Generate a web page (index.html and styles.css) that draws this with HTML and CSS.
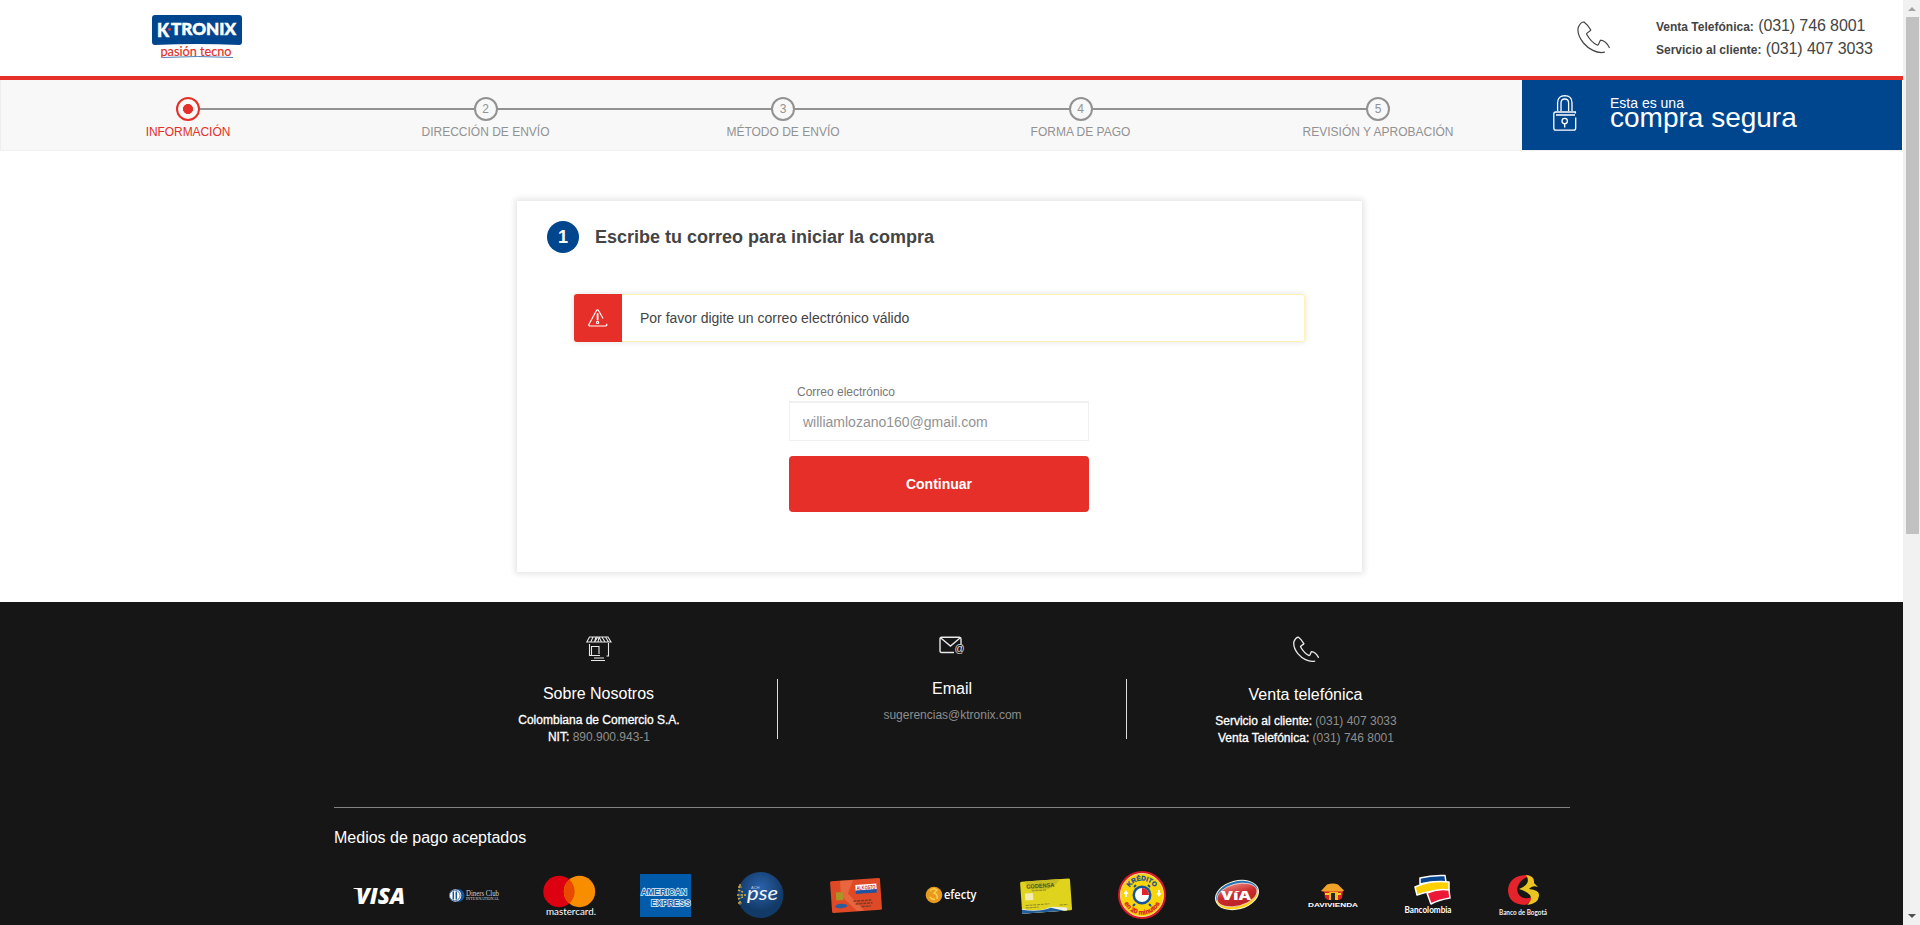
FILE: index.html
```html
<!DOCTYPE html>
<html lang="es">
<head>
<meta charset="utf-8">
<title>K-Tronix - Compra segura</title>
<link rel="stylesheet" href="styles.css">
</head>
<body>
<svg class="defs" width="0" height="0">
  <symbol id="phone" viewBox="0 0 33 33">
    <path d="M27.5 31.2C20 33 11 27.500 6.500 22C2 16.500 .3 11 1.200 6.500C2.500 3.500 5 .8 7 1C9.500 2.800 12 6 13.800 9C12.800 11 10 11 9.500 13C12 17.500 16.500 22.500 20.500 24.200C22.500 24 22 20 23.600 19.200C27 19.500 30.500 23 32.300 26.500" fill="none" stroke="currentColor" stroke-linecap="round" stroke-linejoin="round"/>
  </symbol>
</svg>
<div class="screen">
<div class="page">
  <header class="header">
    <svg class="logo" viewBox="0 0 92 48" width="92" height="48">
      <path d="M3 0H87Q90 0 90 3V27Q90 30 87 30Q45 28 3 30Q0 30 0 27V3Q0 0 3 0Z" fill="#00468f"/>
      <g font-family="Lato, sans-serif" font-weight="900" fill="#fff" stroke="#fff" stroke-width=".5">
        <text x="5" y="21.500" font-size="18" textLength="12" lengthAdjust="spacingAndGlyphs">K</text>
        <text x="19" y="20.300" font-size="17" textLength="65" lengthAdjust="spacingAndGlyphs">TRONIX</text>
      </g>
      <circle cx="17.500" cy="14.300" r="1.500" fill="#e8323a"/>
      <text x="8.500" y="40.500" font-family="Lato, sans-serif" font-size="14" fill="#e52f28" textLength="71" lengthAdjust="spacingAndGlyphs" stroke="#e52f28" stroke-width=".2">pasión tecno</text>
      <path d="M11 42.500Q45 40.500 81 42.500" fill="none" stroke="#3c74ae" stroke-width=".9"/>
    </svg>
    <div class="contact">
      <svg class="contact-icon" width="33" height="33"><use href="#phone"/></svg>
      <div class="contact-lines">
        <p><b>Venta Telefónica:</b> (031) 746 8001</p>
        <p><b>Servicio al cliente:</b> (031) 407 3033</p>
      </div>
    </div>
  </header>

  <div class="progress">
    <ol class="steps">
      <li class="step active"><span class="dot"></span><span class="step-name">INFORMACIÓN</span></li>
      <li class="step"><span class="dot">2</span><span class="step-name">DIRECCIÓN DE ENVÍO</span></li>
      <li class="step"><span class="dot">3</span><span class="step-name">MÉTODO DE ENVÍO</span></li>
      <li class="step"><span class="dot">4</span><span class="step-name">FORMA DE PAGO</span></li>
      <li class="step"><span class="dot">5</span><span class="step-name">REVISIÓN Y APROBACIÓN</span></li>
    </ol>
    <div class="secure">
      <svg class="lock" width="24" height="36" viewBox="0 0 24 36" fill="none" stroke="#fff" stroke-width="1.300">
        <path d="M4.600 16V7.500Q5 .8 11.800 .7Q18.700 .8 19 7.500V16M8 16V8Q8 4 11.800 4Q15.600 4 15.600 8V16"/>
        <path d="M22.400 18.500V17H2.500Q.8 17 .8 19V33Q.8 35.200 3 35.200H20.500Q22.700 35.200 22.700 33V22.500M3 20H22"/>
        <circle cx="11.700" cy="26" r="2.700"/><path d="M11.700 28.700V32.500"/>
      </svg>
      <div class="secure-text"><span>Esta es una</span><strong>compra segura</strong></div>
    </div>
  </div>

  <main class="main">
    <section class="card">
      <div class="card-head"><span class="badge">1</span><h1>Escribe tu correo para iniciar la compra</h1></div>
      <div class="alert">
        <div class="alert-icon">
          <svg width="20" height="18" viewBox="0 0 20 18" fill="none" stroke="#fff" stroke-width="1.200" stroke-linecap="round" stroke-linejoin="round">
            <path d="M14.800 9L10.500 1.500Q9.500 .3 8.500 1.500L.8 15.500Q.6 16.900 2 17H17.500Q19.300 16.800 18.700 15.200"/>
            <path d="M9.600 5V10.500" stroke-width="1.800"/><circle cx="9.600" cy="13.400" r="1.100"/>
          </svg>
        </div>
        <p>Por favor digite un correo electrónico válido</p>
      </div>
      <form class="form">
        <label for="mail">Correo electrónico</label>
        <input id="mail" class="mail" type="text" value="williamlozano160@gmail.com">
        <button class="submit" type="button">Continuar</button>
      </form>
    </section>
  </main>

  <footer class="footer">
    <div class="info">
      <div class="info-col">
        <svg class="info-icon shop" width="26" height="26" viewBox="0 0 26 26" fill="none" stroke="#e8e8e8" stroke-width="1.100">
          <path d="M3.500 1H22L25 6H.8ZM7 1L4.800 6M10 1L8.500 6L11.500 1.500M13 1L12 6M13 1L15.500 6M16 1L19 6M19.500 1L22.500 6"/>
          <path d="M3.500 8V19.500H14M22.500 7V20H20.500M5.500 19V10.500H13V18M8 22H18M5 24.500H19"/>
        </svg>
        <h2>Sobre Nosotros</h2>
        <p><b>Colombiana de Comercio S.A.</b></p>
        <p><b>NIT:</b> 890.900.943-1</p>
      </div>
      <div class="info-col middle">
        <svg class="info-icon mailicon" width="26" height="20" viewBox="0 0 26 20" fill="none" stroke="#e8e8e8" stroke-width="1.400">
          <path d="M15 16.500H2.500Q1 16.500 1 15V3Q1 1.200 2.500 1.200H20.500Q22 1.200 22 3V8M1.800 2L11.500 10L21 2"/>
          <text x="15.500" y="16" font-family="Liberation Sans, sans-serif" font-size="10" fill="#e8e8e8" stroke="none">@</text>
        </svg>
        <h2>Email</h2>
        <p>sugerencias@ktronix.com</p>
      </div>
      <div class="info-col">
        <svg class="info-icon tel" width="26" height="27"><use href="#phone"/></svg>
        <h2>Venta telefónica</h2>
        <p><b>Servicio al cliente:</b> (031) 407 3033</p>
        <p><b>Venta Telefónica:</b> (031) 746 8001</p>
      </div>
    </div>
    <div class="payments">
      <h3>Medios de pago aceptados</h3>
      <div class="brands">
        <svg viewBox="0 0 56 50">
          <text x="5" y="34" font-family="Open Sans, sans-serif" font-size="22" font-weight="800" font-style="italic" fill="#fff" textLength="49" lengthAdjust="spacingAndGlyphs">VISA</text>
          <path d="M2.500 18H8L10 21Q6 18.800 2.500 18.800Z" fill="#fff"/>
        </svg>
        <svg viewBox="0 0 56 50">
          <circle cx="9.500" cy="25.500" r="6.200" fill="#fff"/><path d="M9 19H12A6.500 6.500 0 0 1 12 32H9A6.500 6.500 0 0 0 9 19Z" fill="#15549c"/><circle cx="8.800" cy="25.500" r="5.300" fill="#fff" stroke="#15549c" stroke-width=".8"/><path d="M7.300 21.500V29.500M10.300 21.500V29.500" stroke="#15549c" stroke-width="1.500"/>
          <g font-family="Liberation Serif, serif" fill="#d4d4d4"><text x="20" y="25.500" font-size="7.500" textLength="33" lengthAdjust="spacingAndGlyphs">Diners Club</text><text x="20" y="30" font-size="4.200" textLength="33" lengthAdjust="spacingAndGlyphs">INTERNATIONAL</text></g>
        </svg>
        <svg viewBox="0 0 56 50">
          <circle cx="18" cy="21.500" r="15.700" fill="#dc0010"/><circle cx="38.500" cy="21.500" r="15.700" fill="#f98d00"/><path d="M28.250 9.600A15.700 15.700 0 0 1 28.250 33.400A15.700 15.700 0 0 1 28.250 9.600Z" fill="#e84a00"/>
          <text x="5" y="45" font-family="Lato, sans-serif" font-size="8.500" fill="#fff" textLength="50" lengthAdjust="spacingAndGlyphs">mastercard.</text>
        </svg>
        <svg viewBox="0 0 56 50">
          <rect x="3" y="4" width="51" height="43" fill="#005cab"/>
          <g font-family="Liberation Sans, sans-serif" font-weight="700" font-size="9" fill="#0b62ae" stroke="#e3eef8" stroke-width="1.500" paint-order="stroke"><text x="4" y="24.500" textLength="46" lengthAdjust="spacingAndGlyphs">AMERICAN</text><text x="14" y="35.500" textLength="39.500" lengthAdjust="spacingAndGlyphs">EXPRESS</text></g>
        </svg>
        <svg viewBox="0 0 56 50">
          <defs><radialGradient id="pse" cy=".35"><stop offset="0" stop-color="#2c62ad"/><stop offset="1" stop-color="#123a67"/></radialGradient></defs>
          <circle cx="28.500" cy="25" r="23" fill="url(#pse)"/>
          <path d="M6 17H10M6 20L11 22M5 25H14M6 29L11 27M6 33H10M8 14V18M8 31V35" stroke="#d6ad3d" stroke-width="1.400" stroke-dasharray="2.500 1"/>
          <text x="15" y="30" font-family="Lato, sans-serif" font-size="19" font-style="italic" fill="#f4f7fb" textLength="31" lengthAdjust="spacingAndGlyphs">pse</text>
          <text x="19" y="19" font-family="Liberation Sans, sans-serif" font-size="4" fill="#bccbe0">ACH</text>
        </svg>
        <svg viewBox="0 0 56 50">
          <g transform="rotate(-4 28 25)"><rect x="3" y="9.500" width="50" height="32" rx="1.500" fill="#df4926"/><path d="M13 10H26L20 23L35 41H28L13 25Z" fill="#e7663d"/><rect x="8" y="21" width="7" height="8" fill="#a99523"/><rect x="28" y="15" width="21" height="6" fill="#fff"/><rect x="28" y="20.500" width="21" height="3.500" fill="#2153a1"/>
          <text x="29" y="20" font-family="Liberation Sans, sans-serif" font-weight="700" font-size="5.500" fill="#ca2639" textLength="19" lengthAdjust="spacingAndGlyphs">ALKOSTO</text>
          <ellipse cx="12.500" cy="35" rx="6" ry="2.200" fill="#285d9f"/><path d="M25 31H43M27 34H44M33 37H42" stroke="#7c3d26" stroke-width="1.500" stroke-dasharray="3 .8"/></g>
        </svg>
        <svg viewBox="0 0 56 50">
          <circle cx="11" cy="25" r="8.300" fill="#e69a1f"/><path d="M7 21Q10 17 14 20L11 23Q15 24 14 29M7 27Q9 30 12 29" fill="none" stroke="#ffcb4b" stroke-width="1.500"/>
          <text x="21" y="29" font-family="Open Sans, sans-serif" font-size="12.500" font-weight="600" fill="#fff" textLength="32.500" lengthAdjust="spacingAndGlyphs">efecty</text>
        </svg>
        <svg viewBox="0 0 56 50">
          <g transform="rotate(-4 28 25)"><rect x="3" y="10" width="50" height="32" rx="1.500" fill="#dfd31d"/><path d="M8 10H43Q35 22 18 20Q9 19 8 10Z" fill="#c7bd22"/><path d="M3 37Q20 42 32 37L48 39V42H3Z" fill="#eef1e4"/><path d="M3 38Q20 42 32 38L45 42H3Z" fill="#205d9a"/><rect x="7" y="22" width="8" height="7" fill="#f4ebb2"/>
          <text x="9" y="17.500" font-family="Liberation Sans, sans-serif" font-size="6" font-weight="700" fill="#50521c" textLength="28" lengthAdjust="spacingAndGlyphs">CODENSA</text><path d="M14 20H29M7 34H31M7 36.500H20M41 36H49" stroke="#93892a" stroke-width="1" stroke-dasharray="3 .8"/></g>
        </svg>
        <svg viewBox="0 0 56 50">
          <defs><path id="arcTop" d="M13.500 25A14.500 14.500 0 0 1 42.500 25"/><path id="arcLow" d="M8.500 25A19.500 19.500 0 0 0 47.500 25"/></defs>
          <circle cx="28" cy="25" r="24" fill="#d71927"/><circle cx="28" cy="25" r="21.600" fill="#fcd40a" stroke="#f7eeb2" stroke-width=".8"/><circle cx="28" cy="25" r="9.500" fill="#15549b"/><circle cx="28" cy="25" r="7" fill="#fff"/><path d="M28 25V18A7 7 0 0 1 35 25Z" fill="#e22429"/><path d="M21 34L19 36M35 34L37 36M20 17L22 15M34 15L36 17" stroke="#15549b" stroke-width="2"/><path d="M12 20L9.500 24H11V27H13V24H14.500ZM45 27L42.500 23H44V20H46V23H47.500Z" fill="#fff"/>
          <g font-family="Liberation Sans, sans-serif" font-weight="700" font-size="6.500"><text fill="#17509a" stroke="#17509a" stroke-width=".3"><textPath href="#arcTop" startOffset="50%" text-anchor="middle">KRÉDITO</textPath></text><text fill="#d91c25" stroke="#d91c25" stroke-width=".3"><textPath href="#arcLow" startOffset="50%" text-anchor="middle">en 20 minutos</textPath></text></g>
        </svg>
        <svg viewBox="0 0 56 50">
          <defs><linearGradient id="via" x2="0" y2="1"><stop stop-color="#ea7770"/><stop offset=".45" stop-color="#c92c2c"/><stop offset="1" stop-color="#bb2226"/></linearGradient></defs>
          <g transform="rotate(-15 28 25)"><ellipse cx="28" cy="25" rx="22.500" ry="14.500" fill="#f7f3dc"/><path d="M6.500 25A21.500 13.500 0 0 0 49.500 25Z" fill="#fdd20b"/><path d="M6.500 25A21.500 13.500 0 0 1 49.500 25Z" fill="#2875b8"/><ellipse cx="28" cy="25" rx="20.500" ry="11" fill="url(#via)" stroke="#f4e6dc" stroke-width=".7"/></g>
          <text x="12" y="29.500" font-family="Open Sans, sans-serif" font-weight="800" font-size="13" fill="#fff" textLength="30" lengthAdjust="spacingAndGlyphs">VíA</text>
        </svg>
        <svg viewBox="0 0 56 50">
          <path d="M19 21H38L37 28Q34 31 31 30H23L20 28Z" fill="#d92428"/><path d="M24 22H33V30H24Z" fill="#f9bd20"/><path d="M26 23H30V30H26Z" fill="#292525"/><path d="M16 21L22 14.500Q28 12.500 33 14.500L39 20.500L37 21.500H18Z" fill="#efa429"/><path d="M20 24H24M32 24H36" stroke="#f8d31e" stroke-width="2"/>
          <text x="3" y="37" font-family="Liberation Sans, sans-serif" font-weight="700" font-size="5.800" fill="#fff" textLength="50" lengthAdjust="spacingAndGlyphs">DAVIVIENDA</text>
        </svg>
        <svg viewBox="0 0 56 50">
          <g stroke="#fff" stroke-width="1.500" stroke-linejoin="round"><path d="M20 8Q31 5 45 5.500L46 12Q32 11 20 14Z" fill="#07468e"/><path d="M15 17Q31 10 49 12V20Q31 20 17 25Z" fill="#ffd000"/><path d="M27 23Q38 18 49 20L50 28Q38 30 31 34Z" fill="#ed1836"/></g>
          <text x="4.500" y="42.500" font-family="Lato, sans-serif" font-weight="700" font-size="8.500" fill="#fff" textLength="47" lengthAdjust="spacingAndGlyphs">Bancolombia</text>
        </svg>
        <svg viewBox="0 0 56 50">
          <path d="M31 5Q14 6 13 20Q13 34 30 35Q36 33 37 27Q30 30 25 26Q19 20 26 11Q30 7 36 6Z" fill="#e5232a"/><path d="M31 5Q40 6 39 13L43 17Q37 15 34 19Q45 20 44 26Q43 34 32 35Q38 30 35 25Q31 21 24 19Q37 14 31 5Z" fill="#eac522"/>
          <text x="4" y="44.500" font-family="Lato, sans-serif" font-weight="700" font-size="6.800" fill="#eee" textLength="48" lengthAdjust="spacingAndGlyphs">Banco de Bogotá</text>
        </svg>
      </div>
    </div>
  </footer>
</div>
<div class="scrollbar"><i class="up"></i><div class="thumb"></div><i class="down"></i></div>
</div>
</body>
</html>
```
FILE: styles.css
```css
* { box-sizing: border-box; }
body { margin: 0; font-family: "Liberation Sans", Arial, sans-serif; color: #444; background: #fff; }
h1, h2, h3, p, ol { margin: 0; padding: 0; }
.defs { display: block; }
.screen { display: flex; height: 925px; overflow: hidden; }
.page { width: 1903px; height: 925px; overflow: hidden; }

.header { display: flex; justify-content: space-between; height: 80px; padding: 15px 0 0 152px; border-bottom: 4px solid #e52f28; }
.logo { display: block; }
.contact { display: flex; width: 326px; }
.contact-icon { margin-top: 6px; color: #444; stroke-width: 1.2px; }
.contact-lines { margin-left: 46px; font-size: 16px; line-height: 22px; letter-spacing: -.1px; white-space: nowrap; }
.contact-lines b { font-size: 12px; letter-spacing: 0; }

.progress { display: flex; width: 1902px; height: 71px; border-left: 1px solid #eee; background: #f8f8f8; border-bottom: 1px solid #f0f0f0; }
.steps { display: flex; list-style: none; width: 1521px; padding: 17px 0 0 38.250px; }
.step { position: relative; display: flex; flex-direction: column; align-items: center; flex: 0 0 297.500px; color: #929292; font-size: 12px; }
.step:not(:last-child)::after { content: ""; position: absolute; top: 11px; left: calc(50% + 12px); width: 273.500px; height: 2px; background: #929292; }
.dot { display: flex; align-items: center; justify-content: center; width: 24px; height: 24px; border: 2px solid #929292; border-radius: 50%; line-height: 16px; padding-bottom: 1px; }
.step-name { margin-top: 3px; line-height: 16px; white-space: nowrap; }
.active { color: #e52f28; }
.active .step-name { letter-spacing: -.08px; }
.active .dot { border-color: #e52f28; background: radial-gradient(circle, #e52f28 0 4.700px, transparent 5.300px); }
.secure { display: flex; width: 380px; height: 70px; padding: 15px 0 0 31px; background: #00468f; color: #fff; }
.secure-text { display: flex; flex-direction: column; margin-left: 33px; white-space: nowrap; }
.secure-text span { font-size: 14px; line-height: 16px; }
.secure-text strong { font-size: 28px; font-weight: 400; line-height: 20px; margin-top: -3px; }

.main { height: 451px; padding: 50px 0 0 517px; }
.card { width: 845px; height: 371px; padding: 20px 30px; box-shadow: 0 0 6px 2px rgba(0, 0, 0, .11); background: #fff; }
.card-head { display: flex; align-items: center; gap: 16px; }
.badge { width: 32px; height: 32px; border-radius: 50%; background: #00468f; color: #fff; font-size: 18px; font-weight: 700; line-height: 32px; text-align: center; }
.card-head h1 { font-size: 18px; font-weight: 700; line-height: 32px; white-space: nowrap; }
.alert { display: flex; width: 731px; height: 48px; margin: 41px 0 0 27px; border: 1px solid #fff3b5; border-left: 0; border-radius: 3px; box-shadow: 0 0 6px rgba(0, 0, 0, .12); }
.alert-icon { display: flex; align-items: center; justify-content: center; width: 48px; height: 48px; margin-top: -1px; background: #e52f28; border-radius: 3px 0 0 3px; }
.alert p { margin-left: 18px; font-size: 14px; line-height: 46px; }
.form { display: flex; flex-direction: column; width: 300px; margin: 43px 0 0 242px; }
.form label { margin-bottom: 2px; padding-left: 8px; font-size: 12px; line-height: 14px; color: #777; }
.mail { width: 300px; height: 40px; padding: 0 13px; border: 1px solid #f0f0f0; border-top-width: 2px; border-radius: 0; color: #929292; font: 14px "Liberation Sans", Arial, sans-serif; outline: 0; }
.submit { height: 56px; margin-top: 15px; border: 0; border-radius: 4px; background: #e52f28; color: #fff; font: 700 14px "Liberation Sans", Arial, sans-serif; }

.footer { height: 323px; padding-top: 34px; background: #161616; color: #8e8e8e; }
.info { display: flex; width: 1064px; height: 171px; margin-left: 420px; }
.info-col { display: flex; flex-direction: column; align-items: center; width: 357px; font-size: 12px; line-height: 17px; }
.info-col p { margin-left: 1px; }
.info-col b { font-weight: 400; color: #fff; -webkit-text-stroke: .3px #fff; }
.info-col h2 { margin-bottom: 8px; font-size: 16px; font-weight: 400; line-height: 20px; color: #fff; }
.middle { width: 350px; height: 60px; margin-top: 43px; border-left: 1px solid #ddd; border-right: 1px solid #ddd; }
.middle .info-icon { margin-top: -43px; }
.info-icon { flex: none; color: #e8e8e8; }
.shop { margin-bottom: 22px; }
.mailicon { margin-bottom: 23px; }
.tel { margin-bottom: 22px; stroke-width: 1.7px; }
.payments { width: 1236px; margin-left: 334px; border-top: 1px solid #828282; padding-top: 20px; }
.payments h3 { font-size: 16px; font-weight: 400; line-height: 20px; color: #fff; }
.brands { display: grid; grid-template-columns: repeat(13, 95.400px); justify-items: center; margin: 22px 0 0 -3px; }
.brands svg { width: 56px; height: 50px; }

.scrollbar { display: flex; flex-direction: column; justify-content: space-between; align-items: center; width: 17px; height: 925px; padding: 7px 0; background: #f1f1f1; }
.thumb { width: 13px; height: 517px; margin: 6px 0 auto 1px; background: #c1c1c1; }
.up, .down { border: 4px solid transparent; }
.up { border-top: 0; border-bottom-color: #a3a3a3; }
.down { border-bottom: 0; border-top-color: #505050; }
```
